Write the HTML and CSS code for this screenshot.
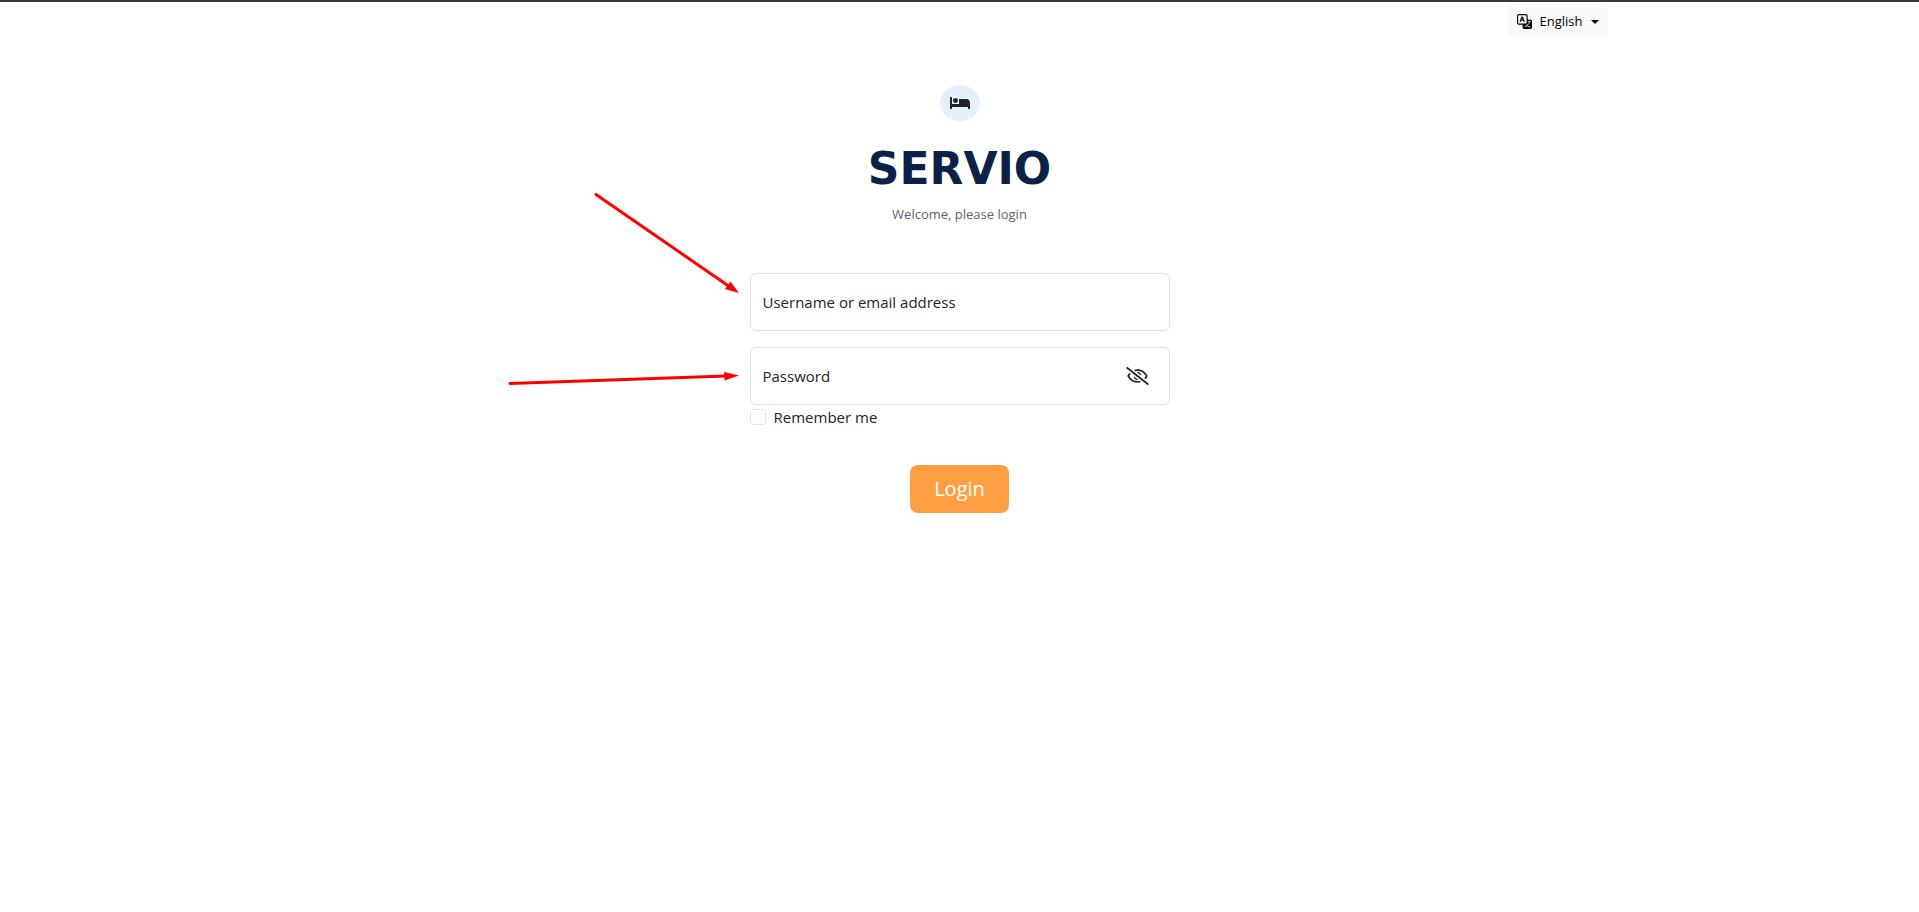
FILE: index.html
```html
<!DOCTYPE html>
<html lang="en">
<head>
<meta charset="utf-8">
<meta name="viewport" content="width=device-width, initial-scale=1">
<title>Servio</title>
<link rel="stylesheet" href="styles.css">
</head>
<body>
<header class="topbar">
  <button class="lang" type="button" aria-haspopup="true">
    <svg class="lang-icon" viewBox="0 0 16 16" aria-hidden="true">
      <rect x="6" y="6" width="10" height="10" rx="1.5"/>
      <rect x="0.6" y="0.6" width="10.2" height="10.2" rx="1.6" fill="#f8f9fa" stroke="#000" stroke-width="1.2"/>
      <path stroke="#000" stroke-width=".4" d="M4.545 6.714 4.11 8H3l1.862-5h1.284L8 8H6.833l-.435-1.286H4.545zm1.634-.736L5.5 3.956h-.049l-.679 2.022H6.18z"/>
      <path d="M11.500 8H14.500M13.500 8.500C12.300 11 10.500 13 8 13.700M10 11.500C10.500 12.500 12 13.500 14.500 14" fill="none" stroke="#f8f9fa" stroke-width=".9"/>
    </svg>
    <span>English</span>
    <span class="caret"></span>
  </button>
</header>
<main class="login">
  <span class="badge">
    <svg class="bed" viewBox="0 64 640 384" aria-hidden="true"><path d="M176 256c44.110 0 80-35.890 80-80s-35.890-80-80-80-80 35.890-80 80 35.890 80 80 80zm352-128H304c-8.840 0-16 7.160-16 16v144H64V80c0-8.840-7.160-16-16-16H16C7.160 64 0 71.160 0 80v352c0 8.840 7.160 16 16 16h32c8.840 0 16-7.160 16-16v-48h512v48c0 8.840 7.160 16 16 16h32c8.840 0 16-7.160 16-16V240c0-61.860-50.140-112-112-112z"/></svg>
  </span>
  <h1 class="brand">SERVIO</h1>
  <p class="welcome">Welcome, please login</p>
  <form class="form">
    <div class="field">
      <input class="input" id="user" type="text">
      <label class="label" for="user">Username or email address</label>
    </div>
    <div class="field">
      <input class="input" id="pass" type="password">
      <label class="label" for="pass">Password</label>
      <button class="reveal" type="button" aria-label="Show password">
        <svg class="eye" viewBox="0 0 640 512" aria-hidden="true"><path d="M634 471L36 3.510A16 16 0 0 0 13.510 6l-10 12.490A16 16 0 0 0 6 41l598 467.490a16 16 0 0 0 22.490-2.490l10-12.490A16 16 0 0 0 634 471zM296.790 146.470l134.790 105.380C429.360 191.910 380.480 144 320 144a112.260 112.260 0 0 0-23.210 2.470zm46.420 219.070L208.420 260.160C210.650 320.090 259.530 368 320 368a113 113 0 0 0 23.210-2.460zM320 112c98.650 0 189.090 55 237.930 144a285.530 285.530 0 0 1-44 60.200l37.740 29.500a333.700 333.700 0 0 0 52.900-75.110 32.350 32.350 0 0 0 0-29.190C550.290 135.590 442.930 64 320 64c-36.700 0-71.710 7-104.630 18.810l46.410 36.290c18.940-4.300 38.340-7.100 58.220-7.100zm0 288c-98.650 0-189.080-55-237.930-144a285.470 285.470 0 0 1 44.050-60.190l-37.740-29.500a333.600 333.600 0 0 0-52.890 75.100 32.350 32.350 0 0 0 0 29.190C89.720 376.410 197.080 448 320 448c36.700 0 71.710-7.050 104.630-18.810l-46.410-36.280C359.280 397.200 339.890 400 320 400z"/></svg>
      </button>
    </div>
    <div class="remember">
      <input class="check" id="remember" type="checkbox">
      <label for="remember">Remember me</label>
    </div>
    <button class="submit" type="submit">Login</button>
    <svg class="arrows" viewBox="0 0 250 200" aria-hidden="true">
      <g fill="none" stroke="#f00" stroke-width="3" stroke-linecap="round">
        <path d="M96 1.500 230 94"/>
        <path d="M10 190.500 226 183"/>
      </g>
      <path fill="#f00" d="M239 100 225 96 230.500 88.500zM239 182.500 224.500 187.500 224 179z"/>
    </svg>
  </form>
</main>
</body>
</html>
```
FILE: styles.css
```css
* { box-sizing: border-box; }

body {
  margin: 0;
  border-top: 2px solid #3b393b;
  background: #fff;
  color: #212529;
  font: 15px/24px "Open Sans", "Noto Sans", sans-serif;
}

button { font-family: inherit; cursor: pointer; }

.topbar {
  display: flex;
  justify-content: flex-end;
  max-width: 1320px;
  margin: 0 auto;
  padding: 4px 12px 0;
}

.lang {
  display: flex;
  align-items: center;
  gap: 8px;
  padding: 5px 9px;
  border: 0;
  border-radius: 4px;
  background: #f8f9fa;
  color: #000;
  font-size: 13px;
  line-height: 21px;
}

.lang-icon { width: 15px; height: 15px; }

.caret {
  border: 4px solid transparent;
  border-top-color: #000;
  border-bottom: 0;
}

.login {
  display: flex;
  flex-direction: column;
  align-items: center;
  padding: 48px 12px;
}

.badge {
  display: flex;
  align-items: center;
  justify-content: center;
  width: 40px;
  height: 36px;
  border-radius: 50%;
  background: #e7effd;
}

.bed { width: 20px; height: 12px; fill: #212529; }

.brand {
  margin: 24px 0 0;
  color: #0c2147;
  font: bold 44px/48px "DejaVu Sans", sans-serif;
}

.welcome {
  margin: 9px 0 0;
  color: #5c636a;
  font-size: 13px;
}

.form {
  position: relative;
  display: flex;
  flex-direction: column;
  width: 100%;
  max-width: 420px;
  margin-top: 47px;
}

.field {
  display: grid;
  grid-template-columns: 1fr auto;
  align-items: center;
  margin-bottom: 16px;
}

.field + .field { margin-bottom: 0; }

.input {
  grid-area: 1 / 1 / 2 / 3;
  width: 100%;
  height: 58px;
  padding: 16px 12px;
  border: 1px solid #dee2e6;
  border-radius: 6px;
  background: #fff;
  font: inherit;
}

.label { grid-area: 1 / 1; justify-self: start; padding-left: 13px; }

.reveal {
  grid-area: 1 / 2;
  display: flex;
  margin-right: 21px;
  padding: 0;
  border: 0;
  background: none;
}

.eye { width: 23px; height: 18px; fill: #212529; }

.remember { display: flex; align-items: center; gap: 8px; }

.check {
  appearance: none;
  width: 16px;
  height: 16px;
  margin: 0;
  border: 1px solid #dee2e6;
  border-radius: 4px;
  background: #fff;
}

.submit {
  align-self: center;
  margin-top: 36px;
  padding: 9px 24px;
  border: 0;
  border-radius: 8px;
  background: #ff9f43;
  color: #fff;
  font-size: 20px;
  line-height: 30px;
}

.arrows {
  position: absolute;
  top: -80px;
  right: 100%;
  width: 250px;
  height: 200px;
  pointer-events: none;
}
```
